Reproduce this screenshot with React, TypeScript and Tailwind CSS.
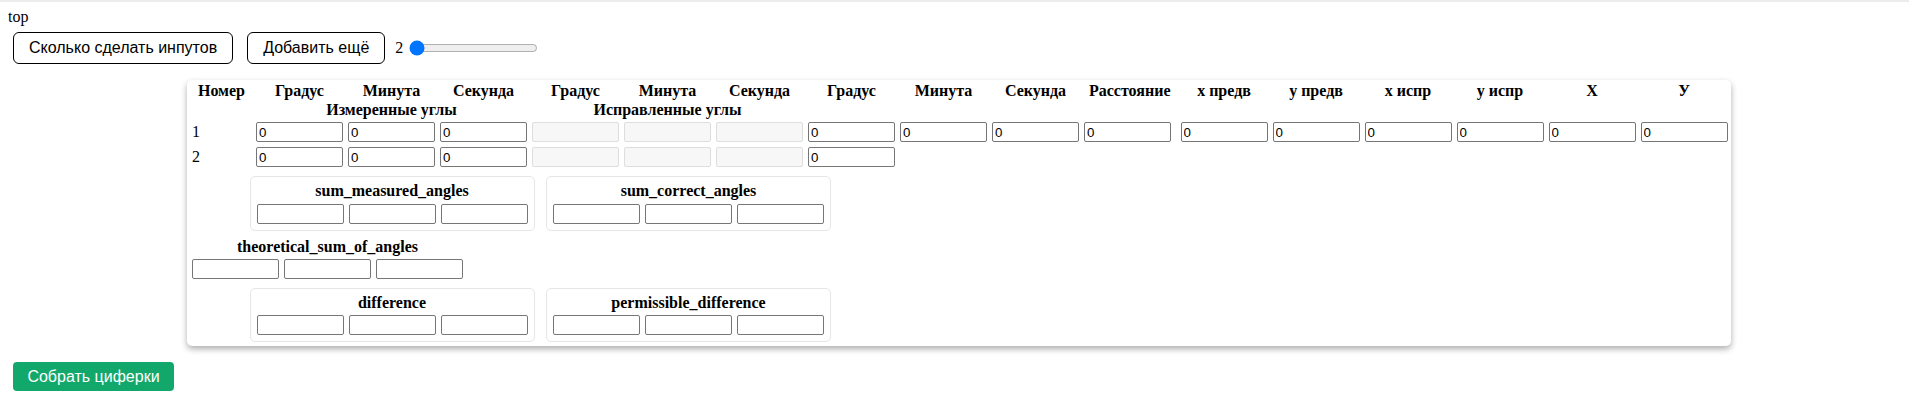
import React from "react";

const headers = [
  "Номер",
  "Градус",
  "Минута",
  "Секунда",
  "Градус",
  "Минута",
  "Секунда",
  "Градус",
  "Минута",
  "Секунда",
  "Расстояние",
  "x предв",
  "y предв",
  "x испр",
  "y испр",
  "X",
  "У",
];

function Field({ value, disabled }: { value?: string; disabled?: boolean }) {
  if (disabled) {
    return (
      <input
        readOnly
        disabled
        value=""
        className="block w-[87px] h-[20px] border border-[#dedede] rounded-[2px] bg-[#f7f7f7] pl-[2px] text-[13.33px] font-['Liberation_Sans',Arial,sans-serif] outline-none"
      />
    );
  }
  return (
    <input
      readOnly
      value={value ?? ""}
      className="block w-[87px] h-[20px] border border-[#767676] rounded-[2px] bg-white pl-[2px] text-[13.33px] leading-[15px] font-['Liberation_Sans',Arial,sans-serif] text-black outline-none"
    />
  );
}

function Triple() {
  return (
    <div className="flex gap-x-[5px]">
      <Field />
      <Field />
      <Field />
    </div>
  );
}

function SumBox({ title }: { title: string }) {
  return (
    <div className="w-[285px] border border-[#e6e6e6] rounded-[5px] px-[6px] pt-[5px] pb-[6px]">
      <div className="text-center font-bold leading-[18.4px]">{title}</div>
      <div className="mt-[3px]">
        <Triple />
      </div>
    </div>
  );
}

export default function App() {
  const grid =
    "grid grid-cols-[59px_repeat(9,87px)_91.5px_repeat(6,87px)] gap-x-[5px]";
  return (
    <div className="min-h-[420px] bg-white text-[16px] leading-[18.4px] text-black font-['Liberation_Serif','Times_New_Roman',serif]">
      <div className="h-[2px] bg-[#ececec]" />
      <div className="pl-[8px] pt-[6px] leading-[18.4px]">top</div>
      <div className="flex items-center ml-[13px] mt-[6px] h-[32px]">
        <button className="h-[32px] px-[15px] border border-black rounded-[6px] bg-white text-[16px] font-['Liberation_Sans',Arial,sans-serif]">
          Сколько сделать инпутов
        </button>
        <button className="ml-[14px] h-[32px] px-[15px] border border-black rounded-[6px] bg-white text-[16px] font-['Liberation_Sans',Arial,sans-serif]">
          Добавить ещё
        </button>
        <span className="ml-[10px]">2</span>
        <input
          type="range"
          min={2}
          max={20}
          defaultValue={2}
          className="ml-[6px] w-[129px]"
        />
      </div>

      <div className="mt-[16px] ml-[187px] w-[1544px] rounded-[5px] bg-white shadow-[0_3px_6px_rgba(0,0,0,0.32)] pl-[5px] pt-[2px] pb-[4px]">
        <div className={grid + " font-bold text-center"}>
          {headers.map((h, i) => (
            <div key={i} className="whitespace-nowrap leading-[18.4px]">
              {h}
            </div>
          ))}
          <div className="col-start-2 col-span-3 leading-[18.4px]">Измеренные углы</div>
          <div className="col-span-3 leading-[18.4px]">Исправленные углы</div>
        </div>

        <div className={grid + " mt-[3px] items-center"}>
          <div className="leading-[18.4px]">1</div>
          <Field value="0" />
          <Field value="0" />
          <Field value="0" />
          <Field disabled />
          <Field disabled />
          <Field disabled />
          <Field value="0" />
          <Field value="0" />
          <Field value="0" />
          <Field value="0" />
          <Field value="0" />
          <Field value="0" />
          <Field value="0" />
          <Field value="0" />
          <Field value="0" />
          <Field value="0" />
        </div>

        <div className={grid + " mt-[5px] items-center"}>
          <div className="leading-[18.4px]">2</div>
          <Field value="0" />
          <Field value="0" />
          <Field value="0" />
          <Field disabled />
          <Field disabled />
          <Field disabled />
          <Field value="0" />
        </div>

        <div className="mt-[9px] ml-[57.5px] flex gap-x-[11.5px]">
          <SumBox title="sum_measured_angles" />
          <SumBox title="sum_correct_angles" />
        </div>

        <div className="mt-[7px] w-[271px]">
          <div className="text-center font-bold leading-[18.4px]">theoretical_sum_of_angles</div>
          <div className="mt-[3px]">
            <Triple />
          </div>
        </div>

        <div className="mt-[9px] ml-[57.5px] flex gap-x-[11.5px]">
          <SumBox title="difference" />
          <SumBox title="permissible_difference" />
        </div>
      </div>

      <button className="mt-[16px] ml-[13px] h-[29px] w-[161px] rounded-[4px] bg-[#13a86b] text-white text-[16px] font-['Liberation_Sans',Arial,sans-serif]">
        Собрать циферки
      </button>
    </div>
  );
}
